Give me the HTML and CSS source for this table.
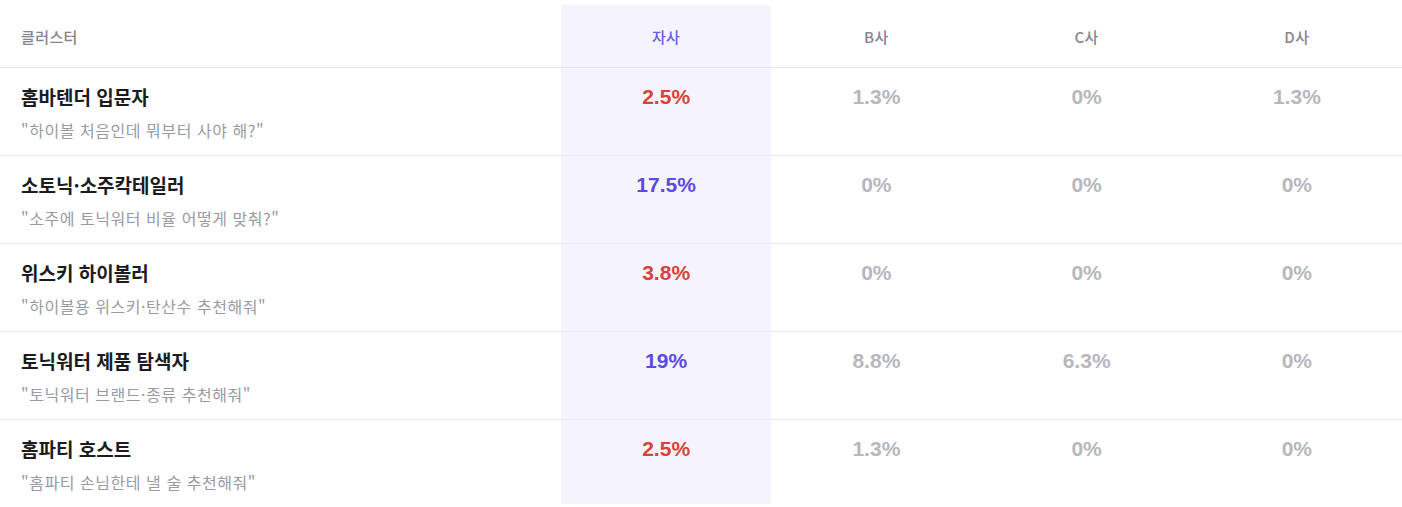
FILE: index.html
```html
<!DOCTYPE html>
<html lang="ko">
<head>
<meta charset="utf-8">
<title>클러스터 비교</title>
<link rel="stylesheet" href="styles.css">
</head>
<body>
<table class="cmp">
  <thead>
    <tr>
      <th class="c-name">클러스터</th>
      <th class="c-val own">자사</th>
      <th class="c-val">B사</th>
      <th class="c-val">C사</th>
      <th class="c-val">D사</th>
    </tr>
  </thead>
  <tbody>
    <tr>
      <td class="c-name"><div class="title">홈바텐더 입문자</div><div class="sub">"하이볼 처음인데 뭐부터 사야 해?"</div></td>
      <td class="c-val own"><span class="num red">2.5%</span></td>
      <td class="c-val"><span class="num">1.3%</span></td>
      <td class="c-val"><span class="num">0%</span></td>
      <td class="c-val"><span class="num">1.3%</span></td>
    </tr>
    <tr>
      <td class="c-name"><div class="title">소토닉·소주칵테일러</div><div class="sub">"소주에 토닉워터 비율 어떻게 맞춰?"</div></td>
      <td class="c-val own"><span class="num purple">17.5%</span></td>
      <td class="c-val"><span class="num">0%</span></td>
      <td class="c-val"><span class="num">0%</span></td>
      <td class="c-val"><span class="num">0%</span></td>
    </tr>
    <tr>
      <td class="c-name"><div class="title">위스키 하이볼러</div><div class="sub">"하이볼용 위스키·탄산수 추천해줘"</div></td>
      <td class="c-val own"><span class="num red">3.8%</span></td>
      <td class="c-val"><span class="num">0%</span></td>
      <td class="c-val"><span class="num">0%</span></td>
      <td class="c-val"><span class="num">0%</span></td>
    </tr>
    <tr>
      <td class="c-name"><div class="title">토닉워터 제품 탐색자</div><div class="sub">"토닉워터 브랜드·종류 추천해줘"</div></td>
      <td class="c-val own"><span class="num purple">19%</span></td>
      <td class="c-val"><span class="num">8.8%</span></td>
      <td class="c-val"><span class="num">6.3%</span></td>
      <td class="c-val"><span class="num">0%</span></td>
    </tr>
    <tr class="last">
      <td class="c-name"><div class="title">홈파티 호스트</div><div class="sub">"홈파티 손님한테 낼 술 추천해줘"</div></td>
      <td class="c-val own"><span class="num red">2.5%</span></td>
      <td class="c-val"><span class="num">1.3%</span></td>
      <td class="c-val"><span class="num">0%</span></td>
      <td class="c-val"><span class="num">0%</span></td>
    </tr>
  </tbody>
</table>
</body>
</html>
```

FILE: styles.css
```css
html, body {
  margin: 0;
  padding: 0;
  background: #ffffff;
}
body {
  font-family: "Noto Sans CJK KR", "Noto Sans", sans-serif;
  color: #1b1b20;
}
.cmp {
  margin-top: 5px;
  width: 1402px;
  border-collapse: collapse;
  table-layout: fixed;
}
.cmp th, .cmp td {
  padding: 0;
  vertical-align: top;
}
.cmp thead tr {
  border-bottom: 1px solid #e4e4e9;
}
.cmp tbody tr {
  border-bottom: 1px solid #ececf0;
}
.cmp tbody tr.last {
  border-bottom: none;
}
.cmp th {
  height: 62px;
  vertical-align: middle;
  font-size: 15px;
  font-weight: 500;
  letter-spacing: 0.4px;
  color: #85858f;
}
.cmp th.c-name {
  width: 540px;
  padding-left: 21px;
  text-align: left;
}
.cmp .c-val {
  width: 210.25px;
  text-align: center;
}
.cmp th.own {
  color: #6a5cf0;
}
.own {
  background: #f5f4fe;
}
.cmp td.c-name {
  padding: 16px 21px 13px;
}
.cmp tr.last td.c-name {
  padding-bottom: 10px;
}
.title {
  font-size: 19px;
  line-height: 26px;
  font-weight: 700;
  color: #1b1b20;
  letter-spacing: 0;
}
.sub {
  margin-top: 8px;
  font-size: 16px;
  line-height: 24px;
  letter-spacing: 0.55px;
  color: #9a9aa3;
}
.cmp td.c-val {
  padding-top: 16px;
}
.num {
  display: block;
  font-family: "Liberation Sans", Arial, sans-serif;
  font-size: 21px;
  line-height: 26px;
  font-weight: 700;
  color: #b7b7be;
}
.num.red {
  color: #d6433a;
}
.num.purple {
  color: #5b4be3;
}
```
